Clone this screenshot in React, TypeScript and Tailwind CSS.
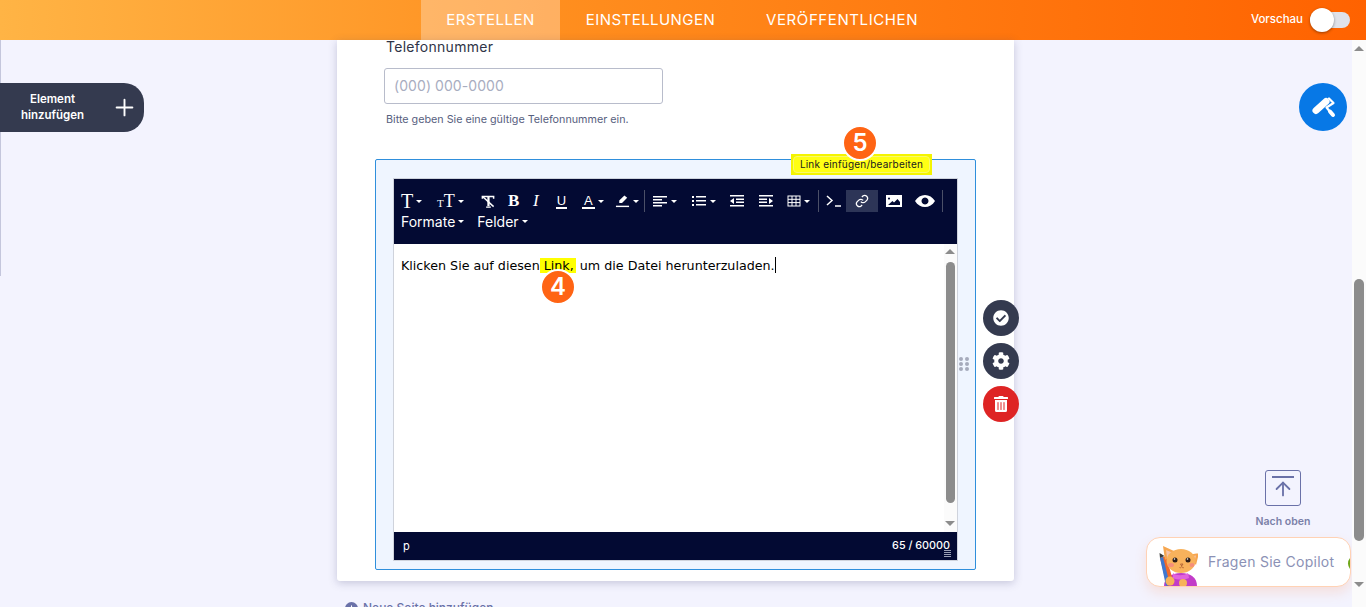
import { Plus, ArrowUp } from "lucide-react";
import { FaCheckCircle, FaCog, FaTrashAlt } from "react-icons/fa";

const font = "font-['Inter','Noto_Sans',sans-serif]";

function Caret() {
  return <span className="ml-[3px] inline-block h-0 w-0 border-x-[3px] border-t-[3px] border-x-transparent border-t-white" />;
}

function Tool({ children, caret, className = "" }: { children: React.ReactNode; caret?: boolean; className?: string }) {
  return (
    <span className={`flex h-[22px] shrink-0 items-center text-white ${className}`}>
      {children}
      {caret && <Caret />}
    </span>
  );
}

function Glyph({ d }: { d: string }) {
  return (
    <svg viewBox="0 0 16 16" className="h-[16px] w-[16px]" fill="currentColor">
      <path d={d} />
    </svg>
  );
}

function Toolbar() {
  return (
    <div className="h-[65px] bg-[#030a33] px-[7px] pt-[11px]">
      <div className="flex items-center">
        <Tool caret className="w-[30px] font-['Liberation_Serif',serif] text-[20px]">T</Tool>
        <Tool caret className="ml-[6px] w-[36px] font-['Liberation_Serif',serif] text-[18px]"><span className="mt-[5px] text-[11px]">T</span>T</Tool>
        <Tool className="ml-[7px] w-[20px]">
          <svg viewBox="0 0 16 16" className="h-[15px] w-[16px]" fill="none" stroke="currentColor">
            <path d="M2 5V2.700h12V5" strokeWidth="1.600" />
            <path d="M8.500 3v10" strokeWidth="2.400" />
            <path d="M6 14h5" strokeWidth="1.400" />
            <path d="M2.500 3l11.500 10.500" strokeWidth="1.600" />
          </svg>
        </Tool>
        <Tool className="ml-[8px] w-[12px] font-['Liberation_Serif',serif] text-[17px] font-bold">B</Tool>
        <Tool className="ml-[13px] w-[12px] font-['Liberation_Serif',serif] text-[17px] italic">I</Tool>
        <Tool className="ml-[10px] w-[13px] justify-center">
          <span className="border-b-[2px] border-white px-[1px] font-['Liberation_Sans',sans-serif] text-[13px] leading-[13px]">U</span>
        </Tool>
        <Tool caret className="ml-[14px] w-[26px]">
          <span className="border-b-[2px] border-white px-[2px] font-['Liberation_Sans',sans-serif] text-[13px] leading-[13px]">A</span>
        </Tool>
        <Tool caret className="ml-[7px] w-[24px]">
          <svg viewBox="0 0 16 14" className="h-[14px] w-[15px]" fill="currentColor"><path d="M10 1l3 2.500L7.500 9H4.500V6.500z" /><path d="M1 12h14v1.500H1z" /></svg>
        </Tool>
        <span className="ml-[5px] h-[22px] w-px bg-[#4b5068]" />
        <Tool caret className="ml-[7px] w-[28px]"><Glyph d="M1 3h14v1.500H1zM1 6h9v1.500H1zM1 9h14v1.500H1zM1 12h9v1.500H1z" /></Tool>
        <Tool caret className="ml-[11px] w-[28px]"><Glyph d="M1 3h2v2H1zM5 3h10v1.500H5zM1 7h2v2H1zM5 7h10v1.500H5zM1 11h2v2H1zM5 11h10v1.500H5z" /></Tool>
        <Tool className="ml-[10px] w-[16px]"><Glyph d="M1 2h14v1.500H1zM7 5.500h8V7H7zM7 8.500h8V10H7zM1 12h14v1.500H1zM5 5v6L1 8z" /></Tool>
        <Tool className="ml-[13px] w-[16px]"><Glyph d="M1 2h14v1.500H1zM1 5.500h8V7H1zM1 8.500h8V10H1zM1 12h14v1.500H1zM11 5v6l4-3z" /></Tool>
        <Tool caret className="ml-[13px] w-[28px]">
          <svg viewBox="0 0 14 14" className="h-[14px] w-[14px]" fill="none" stroke="currentColor" strokeWidth="1"><rect x="1" y="2" width="12" height="10" /><path d="M1 5.300h12M1 8.600h12M5 2v10M9 2v10" /></svg>
        </Tool>
        <span className="ml-[3px] h-[22px] w-px bg-[#4b5068]" />
        <Tool className="ml-[7px] w-[16px]">
          <svg viewBox="0 0 16 14" className="h-[14px] w-[16px]" fill="none" stroke="currentColor" strokeWidth="1.500"><path d="M1 2l5 4.500L1 11" /><path d="M9 12h6" /></svg>
        </Tool>
        <span className="ml-[4px] flex h-[22px] w-[32px] shrink-0 items-center justify-center bg-[#2d3557] text-white">
          <svg viewBox="0 0 24 24" className="h-[14px] w-[14px]" fill="none" stroke="currentColor" strokeWidth="2.200"><path d="M10 13a5 5 0 0 0 7.500.5l3-3a5 5 0 0 0-7-7l-1.700 1.700" /><path d="M14 11a5 5 0 0 0-7.500-.5l-3 3a5 5 0 0 0 7 7l1.700-1.700" /></svg>
        </span>
        <Tool className="ml-[8px] w-[16px]">
          <svg viewBox="0 0 16 14" className="h-[14px] w-[16px]"><path fill="currentColor" fillRule="evenodd" d="M0 1h16v12H0zM3 3.500a1 1 0 1 0 .010 0zM2 11h12V8l-2.500-3L8 8.500 6.500 7z" /></svg>
        </Tool>
        <Tool className="ml-[13px] w-[20px]">
          <svg viewBox="0 0 20 14" className="h-[14px] w-[20px]"><path fill="currentColor" fillRule="evenodd" d="M0 7c2.500-4 6-6 10-6s7.500 2 10 6c-2.500 4-6 6-10 6S2.500 11 0 7zm10-3.500a3.500 3.500 0 1 0 .010 0z" /></svg>
        </Tool>
        <span className="ml-[7px] h-[22px] w-px bg-[#4b5068]" />
      </div>
      <div className="mt-[-1px] flex items-center text-[14px] text-white">
        <span className="flex items-center">Formate<Caret /></span>
        <span className="ml-[13px] flex items-center">Felder<Caret /></span>
      </div>
    </div>
  );
}

function Editor() {
  return (
    <div className="flex h-[383px] flex-col border border-[#cfd3dc]">
      <Toolbar />
      <div className="relative flex min-h-0 flex-1 bg-white">
        <div className="flex-1 px-[7px] pt-[13px] font-['DejaVu_Sans',sans-serif] text-[12.700px] leading-[17px] text-black">
          Klicken Sie auf diesen<span className="bg-[#ffff00] pr-[2px]"> Link,</span> um die Datei herunterzuladen.<span className="inline-block h-[16px] w-px bg-black align-[-3px]" />
        </div>
        <div className="flex w-[13px] flex-col items-center bg-[#fbfbfb] pr-px pt-[5px]">
          <span className="h-0 w-0 border-x-[5px] border-b-[5px] border-x-transparent border-b-[#8c8c8c]" />
          <span className="mt-[8px] h-[241px] w-[9px] rounded-full bg-[#8c8c8c]" />
          <span className="mt-[18px] h-0 w-0 border-x-[5px] border-t-[5px] border-x-transparent border-t-[#8c8c8c]" />
        </div>
      </div>
      <div className="relative flex h-[28px] items-center justify-between bg-[#030a33] pl-[9px] pr-[7px] text-[11px] text-white">
        <span>p</span>
        <span className="text-[10.800px] font-medium">65 / 60000</span>
        <span className="absolute bottom-[3px] right-[6px] h-[7px] w-[7px] bg-[repeating-linear-gradient(0deg,#9aa0b5_0,#9aa0b5_1px,transparent_1px,transparent_2px)]" />
      </div>
    </div>
  );
}

function Badge({ n, className }: { n: number; className: string }) {
  return (
    <span className={`absolute z-10 flex h-[36px] w-[36px] items-center justify-center rounded-full border-2 border-white bg-[#ff6414] text-[24px] font-semibold text-white ${className}`}>
      {n}
    </span>
  );
}

function SideButton({ children, className }: { children: React.ReactNode; className: string }) {
  return <span className={`flex h-[36px] w-[36px] items-center justify-center rounded-full text-white ${className}`}>{children}</span>;
}

function Cat() {
  return (
    <svg viewBox="0 0 44 44" className="h-[44px] w-[44px]">
      <path d="M10 44c0-8 7-13 17-13s16 5 16 13z" fill="#c23cc8" />
      <path d="M19 31c3 3 11 3 15 0l1 5c-5 2-12 2-16 0z" fill="#e263dc" />
      <path d="M6 16l6-2 8 28-7 2z" fill="#f0682a" />
      <path d="M6 16l3-1 7 28-4 1z" fill="#3f78d0" />
      <path d="M6 16l-.5-5 5 3z" fill="#3a3a3a" />
      <circle cx="16" cy="39" r="4.500" fill="#f7b259" />
      <circle cx="29" cy="41" r="4" fill="#f7b259" />
      <path d="M9 4l11 5-9 9zM45 11l-3 12-9-10z" fill="#f6a650" />
      <path d="M12 8l6 2.500-5 5zM42 13.500l-1.500 6-4.500-5z" fill="#f7c4a8" />
      <ellipse cx="27" cy="19" rx="14.500" ry="12" fill="#f8b25c" />
      <circle cx="21" cy="18" r="2.500" fill="#2a1c18" />
      <circle cx="34" cy="18" r="2.500" fill="#2a1c18" />
      <circle cx="20.500" cy="17" r=".8" fill="#fff" />
      <circle cx="33.500" cy="17" r=".8" fill="#fff" />
      <ellipse cx="17" cy="23" rx="3" ry="2" fill="#f58e7a" />
      <ellipse cx="38" cy="23" rx="2.500" ry="2" fill="#f58e7a" />
      <path d="M26.500 22h2.500L27.700 24zM25.500 25.500c1 .7 1.800 0 2.200-1 .4 1 1.200 1.700 2.200 1" fill="none" stroke="#a0522d" strokeWidth=".7" />
    </svg>
  );
}

export default function App() {
  return (
    <div className={`flex h-[607px] w-[1366px] flex-col overflow-hidden bg-[#f3f3fe] ${font}`}>
      <header className="flex h-[40px] shrink-0 items-center bg-[linear-gradient(90deg,#ffb445,#ff8f1f_40%,#ff6200_100%)] pl-[421px] pr-[16px] text-white">
        <nav className="flex h-full items-center text-[15px] tracking-[0.03em]">
          <span className="flex h-full w-[139px] items-center justify-center bg-[#ffffff4d]">ERSTELLEN</span>
          <span className="flex h-full w-[181px] items-center justify-center">EINSTELLUNGEN</span>
          <span className="flex h-full items-center pl-[25px] tracking-[0.04em]">VERÖFFENTLICHEN</span>
        </nav>
        <div className="ml-auto flex items-center">
          <span className="text-[11.500px] font-medium">Vorschau</span>
          <span className="ml-[7px] flex h-[16px] w-[40px] items-center rounded-full bg-[#dfe2ea]">
            <span className="h-[24px] w-[24px] rounded-full bg-white shadow-[0_1px_3px_rgba(0,0,0,0.4)]" />
          </span>
        </div>
      </header>

      <main className="relative flex min-h-0 flex-1">
        <span className="absolute left-0 top-0 h-[236px] w-px bg-[#c4c6dc]" />

        <div className="ml-[337px] h-[541px] w-[677px] shrink-0 self-start rounded-b-[3px] bg-white pl-[38px] pr-[38px] shadow-[0_2px_8px_rgba(60,60,110,0.25)]">
          <div className="pl-[11px] text-[14px] leading-[14px] tracking-[0.02em] text-[#2f3447]">Telefonnummer</div>
          <div className="ml-[9px] mt-[14px] flex h-[36px] w-[279px] items-center rounded-[3px] border border-[#b8bccb] px-[9px] pb-px text-[14px] tracking-[0.005em] text-[#a8adbf]">
            (000) 000-0000
          </div>
          <div className="ml-[11px] mt-[9px] text-[10.750px] leading-[13px] text-[#57607e]">Bitte geben Sie eine gültige Telefonnummer ein.</div>
          <div className="relative mt-[33px] h-[411px] w-[601px] rounded-[2px] border border-[#2f8fdc] bg-[#eff5ff] px-[17px] pt-[18px]">
            <Editor />
            <span className="absolute right-[6px] top-[197px] grid grid-cols-2 gap-x-[2px] gap-y-[1px]">
              {Array.from({ length: 6 }).map((_, i) => (
                <span key={i} className="h-[4px] w-[4px] rounded-full bg-[#a6abbc]" />
              ))}
            </span>
          </div>
        </div>

        {/* floating bits */}
        <Badge n={5} className="left-[842px] top-[85px]" />
        <div className="absolute left-[791px] top-[114px] z-[5] h-[21px] w-[141px] bg-[#f4f400] p-[2px]">
          <div className="flex h-full items-center justify-center rounded-[4px] border border-[#f9f96a] bg-[#ffff14] text-[10px] tracking-[0.02em] text-[#202020]">
            Link einfügen/bearbeiten
          </div>
        </div>
        <Badge n={4} className="left-[540px] top-[229px]" />

        <div className="absolute left-0 top-[43px] flex h-[49px] w-[144px] items-center rounded-r-[20px] bg-[#343a4f] text-white">
          <span className="-mt-px w-[105px] text-center text-[11.500px] font-semibold leading-[16px]">Element<br />hinzufügen</span>
          <Plus className="ml-[6px] h-[27px] w-[27px]" strokeWidth={1.700} />
        </div>

        <div className="absolute left-[983px] top-[260px] flex flex-col gap-[7px]">
          <SideButton className="bg-[#343a4f]"><FaCheckCircle className="h-[16px] w-[16px]" /></SideButton>
          <SideButton className="bg-[#343a4f]"><FaCog className="h-[18px] w-[18px]" /></SideButton>
          <SideButton className="bg-[#de2424]"><FaTrashAlt className="h-[16px] w-[14px]" /></SideButton>
        </div>

        <span className="absolute left-[1299px] top-[43px] flex h-[48px] w-[48px] items-center justify-center rounded-full bg-[#0778e6] text-white">
          <svg viewBox="0 0 48 48" className="h-[48px] w-[48px]" fill="none" stroke="currentColor" strokeLinecap="round" strokeLinejoin="round">
            <path d="M17 27.500l10-9" strokeWidth="7" />
            <path d="M30 15.500l4.500 4.500-7 4.500 5 6" strokeWidth="2.200" />
            <path d="M31 28.500l3 3.500" strokeWidth="4" />
          </svg>
        </span>

        <div className="absolute left-[1243px] top-[430px] flex w-[80px] flex-col items-center text-[#6a71a8]">
          <span className="flex h-[36px] w-[36px] items-center justify-center rounded-[3px] border border-[#6a71a8]">
            <span className="flex flex-col items-center">
              <span className="h-[2px] w-[22px] bg-[#6a71a8]" />
              <ArrowUp className="h-[22px] w-[22px]" strokeWidth={2} />
            </span>
          </span>
          <span className="mt-[8px] text-[10.500px] font-semibold text-[#7a80a8]">Nach oben</span>
        </div>

        <div className="absolute left-[1146px] top-[497px] flex h-[50px] w-[205px] items-end overflow-hidden rounded-[14px] border border-[#ffd2b5] bg-white pl-[7px] shadow-[0_6px_12px_rgba(255,140,80,0.18)]">
          <Cat />
          <span className="mb-[14px] ml-[10px] text-[14px] tracking-[0.02em] text-[#8b91b5]">Fragen Sie Copilot</span>
          <span className="absolute right-[-15px] top-[17px] h-[17px] w-[17px] rounded-full bg-[#6fa71a]" />
        </div>

        <div className="absolute left-[345px] top-[559px] flex items-center gap-[5px] text-[12px] font-medium text-[#6a71a8]">
          <span className="flex h-[13px] w-[13px] items-center justify-center rounded-full bg-[#6a71a8] text-white"><Plus className="h-[9px] w-[9px]" strokeWidth={3} /></span>
          Neue Seite hinzufügen
        </div>

        <div className="absolute bottom-0 right-0 top-0 flex w-[14px] flex-col items-center bg-[#fbfbfb] pt-[6px]">
          <span className="h-0 w-0 border-x-[5px] border-b-[5px] border-x-transparent border-b-[#8c8c8c]" />
          <span className="mt-[228px] h-[262px] w-[10px] rounded-full bg-[#8c8c8c]" />
          <span className="mt-[41px] h-0 w-0 border-x-[5px] border-t-[5px] border-x-transparent border-t-[#8c8c8c]" />
        </div>
      </main>
    </div>
  );
}
